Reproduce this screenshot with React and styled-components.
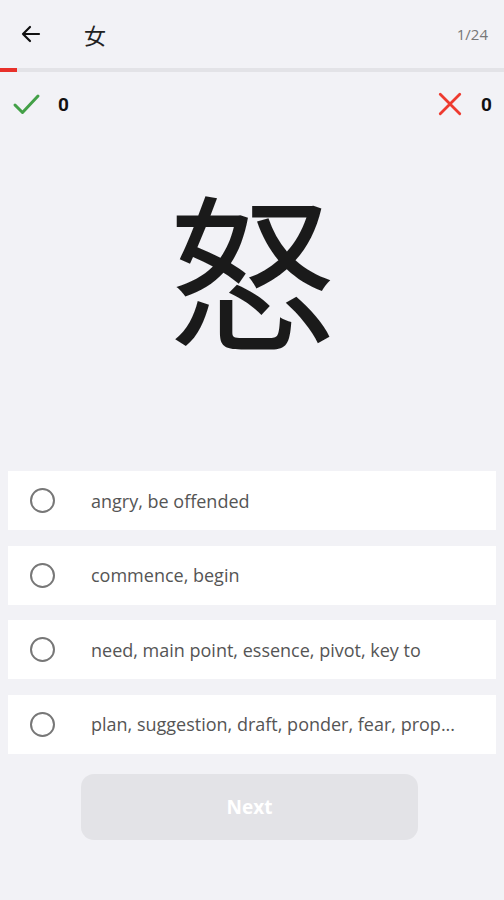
import React from 'react';
import styled, { createGlobalStyle } from 'styled-components';

const GlobalStyle = createGlobalStyle`
  html, body {
    margin: 0;
    padding: 0;
    background: #f2f2f6;
    font-family: "Open Sans", "Noto Sans", sans-serif;
  }
`;

const Screen = styled.div`
  width: 504px;
  height: 900px;
  display: flex;
  flex-direction: column;
  background: #f2f2f6;
  overflow: hidden;
`;

const TopBar = styled.header`
  height: 68px;
  display: flex;
  align-items: center;
  padding: 0 16px 0 18px;
  box-sizing: border-box;
`;

const BackButton = styled.button`
  width: 26px;
  height: 26px;
  padding: 0;
  border: 0;
  background: none;
  display: flex;
  align-items: center;
  justify-content: center;
  color: #111;
`;

const Title = styled.div`
  margin-left: 40px;
  font-family: "Noto Sans CJK JP", serif;
  font-size: 22px;
  color: #222;
  flex: 1;
`;

const Counter = styled.div`
  font-size: 15px;
  color: #777;
`;

const Track = styled.div`
  height: 4px;
  background: #e3e3e7;
`;

const Fill = styled.div`
  height: 100%;
  background: #e8312a;
`;

const ScoreRow = styled.div`
  height: 64px;
  display: flex;
  align-items: center;
  justify-content: space-between;
  padding: 0 12px 0 12px;
`;

const Score = styled.div`
  display: flex;
  align-items: center;
  gap: ${(p) => p.$gap}px;
  font-family: "Roboto", sans-serif;
  font-weight: 700;
  font-size: 19px;
  color: #111;
`;

const KanjiArea = styled.div`
  height: 335px;
  display: flex;
  align-items: center;
  justify-content: center;
`;

const Kanji = styled.div`
  font-family: "Noto Sans CJK JP", serif;
  font-size: 168px;
  line-height: 1;
  color: #1a1a1a;
  margin-top: -78px;
`;

const Options = styled.div`
  display: flex;
  flex-direction: column;
  gap: 15.5px;
  padding: 0 8px;
`;

const Option = styled.div`
  height: 59px;
  background: #fff;
  display: flex;
  align-items: center;
  padding-left: 22px;
  box-sizing: border-box;
`;

const Radio = styled.span`
  width: 21px;
  height: 21px;
  border: 2px solid #777;
  border-radius: 50%;
  flex-shrink: 0;
`;

const OptionText = styled.span`
  margin-left: 36px;
  font-size: 18px;
  color: #555;
  white-space: nowrap;
  overflow: hidden;
  padding-right: 20px;
`;

const NextButton = styled.button`
  align-self: flex-start;
  margin: 20px 0 0 81px;
  width: 337px;
  height: 66px;
  border: 0;
  border-radius: 13px;
  background: #e3e3e7;
  color: #fff;
  font-family: "Open Sans", sans-serif;
  font-weight: 700;
  font-size: 19px;
`;

const options = [
  'angry, be offended',
  'commence, begin',
  'need, main point, essence, pivot, key to',
  'plan, suggestion, draft, ponder, fear, prop...',
];

export default function App() {
  return (
    <Screen>
      <GlobalStyle />
      <TopBar>
        <BackButton>
          <svg width="24" height="24" viewBox="0 0 24 24" fill="none" stroke="currentColor" strokeWidth="2.2" strokeLinecap="round" strokeLinejoin="round">
            <path d="M20 12H4M11 5l-7 7 7 7" />
          </svg>
        </BackButton>
        <Title>女</Title>
        <Counter>1/24</Counter>
      </TopBar>
      <Track>
        <Fill style={{ width: `${(1 / 24) * 100 * 0.8}%` }} />
      </Track>
      <ScoreRow>
        <Score $gap={16}>
          <svg width="30" height="24" viewBox="0 0 30 24" fill="none" stroke="#43a047" strokeWidth="3" strokeLinecap="round" strokeLinejoin="round">
            <path d="M3 13l7.5 7.5L26 4" />
          </svg>
          0
        </Score>
        <Score $gap={18}>
          <svg width="26" height="26" viewBox="0 0 24 24" fill="none" stroke="#ee3a2f" strokeWidth="2.6" strokeLinecap="round">
            <path d="M3 3l18 18M21 3L3 21" />
          </svg>
          0
        </Score>
      </ScoreRow>
      <KanjiArea>
        <Kanji>怒</Kanji>
      </KanjiArea>
      <Options>
        {options.map((o) => (
          <Option key={o}>
            <Radio />
            <OptionText>{o}</OptionText>
          </Option>
        ))}
      </Options>
      <NextButton>Next</NextButton>
    </Screen>
  );
}
